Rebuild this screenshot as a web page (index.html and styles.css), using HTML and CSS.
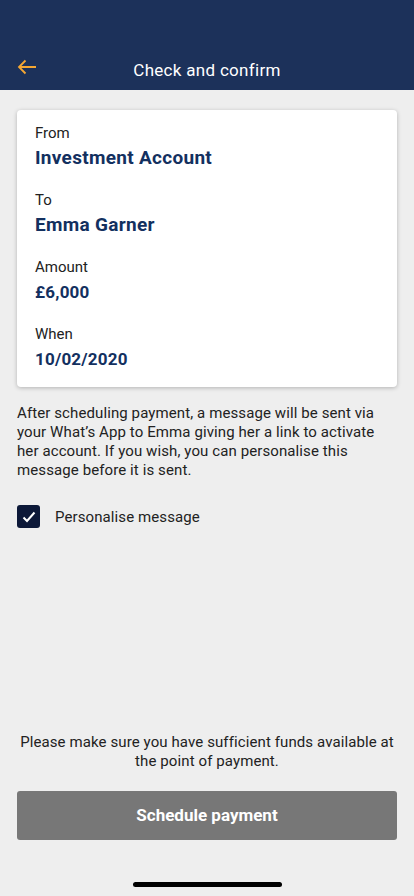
FILE: index.html
```html
<!DOCTYPE html>
<html>
<head>
    <meta charset="UTF-8">
    <title>Check and confirm</title>
    <link rel="stylesheet" href="styles.css">
</head>
<body>
<div class="page">
    <div class="header">
        <a href="javascript:;" class="back">
            <svg width="20" height="16" viewBox="0 0 20 16"><path d="M19 8H2M8.5 1.5L2 8l6.5 6.5" fill="none" stroke="#f5a733" stroke-width="1.8"/></svg>
        </a>
        <h1 class="title">Check and confirm</h1>
    </div>

    <div class="content">
        <div class="card">
            <div class="row">
                <p class="label">From</p>
                <p class="value">Investment Account</p>
            </div>
            <div class="row">
                <p class="label">To</p>
                <p class="value">Emma Garner</p>
            </div>
            <div class="row">
                <p class="label">Amount</p>
                <p class="value small">£6,000</p>
            </div>
            <div class="row">
                <p class="label">When</p>
                <p class="value small">10/02/2020</p>
            </div>
        </div>

        <p class="info">After scheduling payment, a message will be sent via your What’s App to Emma giving her a link to activate her account. If you wish, you can personalise this message before it is sent.</p>

        <label class="check">
            <span class="box">
                <svg width="14" height="12" viewBox="0 0 14 12"><path d="M1.5 6.5l3.5 3.5 7.5-8.5" fill="none" stroke="#fff" stroke-width="2"/></svg>
            </span>
            <span class="check-text">Personalise message</span>
        </label>
    </div>

    <div class="footer">
        <p class="note">Please make sure you have sufficient funds available at the point of payment.</p>
        <a href="javascript:;" class="btn">Schedule payment</a>
        <div class="home"></div>
    </div>
</div>
</body>
</html>
```

FILE: styles.css
```css
* {
    margin: 0;
    padding: 0;
    box-sizing: border-box;
    font-family: Roboto, "Liberation Sans", sans-serif;
}

a {
    text-decoration: none;
}

html, body {
    width: 100%;
    height: 100%;
    background: #eeeeee;
}

.page {
    display: flex;
    flex-direction: column;
    height: 896px;
}

.header {
    display: flex;
    align-items: center;
    height: 90px;
    padding: 50px 17px 0;
    background: #1c315a;
}

.back {
    display: flex;
    width: 20px;
    margin-top: -6px;
}

.title {
    flex: 1;
    margin-right: 20px;
    text-align: center;
    font-size: 17px;
    font-weight: 400;
    color: #fff;
    letter-spacing: 0.3px;
}

.content {
    flex: 1;
    padding: 20px 17px 0;
}

.card {
    padding: 13px 18px 17px;
    background: #fff;
    border-radius: 4px;
    box-shadow: 0 1px 4px rgba(0, 0, 0, 0.25);
}

.row {
    height: 67px;
}

.row:last-child {
    height: auto;
}

.label {
    font-size: 15px;
    line-height: 20px;
    color: #222;
}

.value {
    margin-top: 4px;
    font-size: 19px;
    line-height: 22px;
    font-weight: 700;
    letter-spacing: 0.3px;
    color: #13305f;
}

.value.small {
    font-size: 17px;
    letter-spacing: 0.2px;
}

.info {
    margin-top: 17px;
    font-size: 15px;
    line-height: 19px;
    letter-spacing: 0.1px;
    color: #222;
}

.check {
    display: flex;
    align-items: center;
    margin-top: 25px;
}

.box {
    display: flex;
    align-items: center;
    justify-content: center;
    width: 23px;
    height: 23px;
    border-radius: 3px;
    background: #0c1838;
}

.check-text {
    margin-left: 15px;
    font-size: 15px;
    letter-spacing: 0.1px;
    color: #222;
}

.footer {
    padding: 0 17px;
}

.note {
    font-size: 15px;
    line-height: 19px;
    letter-spacing: 0.1px;
    text-align: center;
    color: #222;
}

.btn {
    display: block;
    margin-top: 20px;
    height: 49px;
    line-height: 49px;
    text-align: center;
    font-size: 17px;
    font-weight: 700;
    color: #fff;
    background: #777;
    border-radius: 3px;
}

.home {
    width: 149px;
    height: 5px;
    margin: 42px auto 9px;
    background: #000;
    border-radius: 3px;
}
```
